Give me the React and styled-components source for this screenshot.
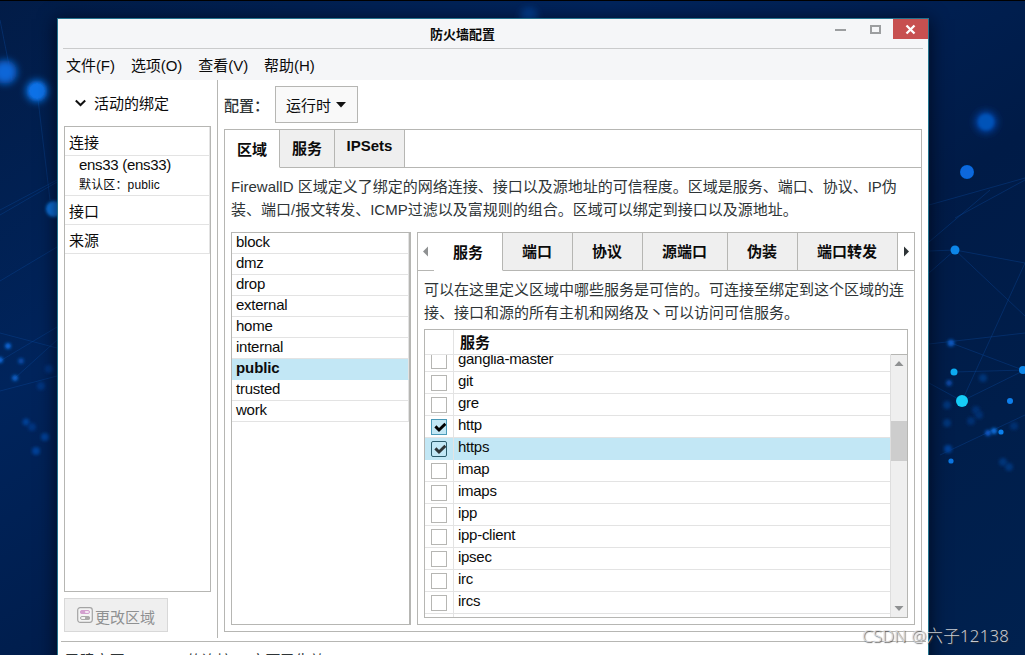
import styled, { createGlobalStyle } from 'styled-components'

const GlobalStyle = createGlobalStyle`
    * {
        box-sizing:border-box;
    }
    body {
        margin:0;
        background:#011c46;
        overflow:hidden;
        font-family:"Liberation Sans", "Noto Sans CJK SC", sans-serif;
        font-size:15px;
        color:#0b0b0b;
    }
`
const Desktop = styled.div`
    position:relative;
    width:1025px;
    height:655px;
    overflow:hidden;
    border-top:1px solid #000;
`
const Wallpaper = styled.svg`
    position:absolute;
    top:-1px;
    left:0;
    z-index:-1;
`
const Window = styled.div`
    position:absolute;
    left:57px;
    top:17px;
    width:872px;
    height:660px;
    border:1px solid #24748f;
    background:#fff;
    box-shadow:0 3px 16px 2px rgba(0,5,20,0.7);
    display:flex;
    flex-direction:column;
`
const Header = styled.div`
    background:#f5f6f8;
    height:61px;
    flex:none;
`
const TitleBar = styled.div`
    display:grid;
    grid-template-columns:105px 1fr 105px;
    height:30px;
    margin-left:5px;
    border-bottom:1px solid #cacbcc;
    width:860px;
`
const Title = styled.div`
    grid-column:2;
    text-align:center;
    font-size:13px;
    font-weight:700;
    line-height:31px;
    padding-right:61px;
`
const WindowButtons = styled.div`
    display:flex;
    width:110px;
    justify-content:flex-end;
`
const WindowButton = styled.div`
    width:35px;
    height:20px;
    flex:none;
    background:${props => props.$close ? '#c75050' : 'none'};
    svg {
        display:block;
    }
`
const MenuBar = styled.div`
    display:flex;
    gap:16px;
    padding-left:8px;
    line-height:34px;
    letter-spacing:-0.05px;
`
const Body = styled.div`
    display:flex;
    height:558px;
    flex:none;
`
const Sidebar = styled.div`
    width:160px;
    height:558px;
    border-right:1px solid #b6b6b3;
    padding:9px 6px 0;
    display:flex;
    flex-direction:column;
`
const Expander = styled.div`
    display:flex;
    align-items:center;
    gap:7px;
    height:29px;
    line-height:29px;
    padding-left:10px;
    margin-bottom:8px;
    svg {
        margin-bottom:1px;
    }
`
const Bindings = styled.div`
    width:147px;
    height:466px;
    border:1px solid #b6b6b3;
`
const BindingRow = styled.div`
    height:${props => props.$tall ? '40px' : '29px'};
    padding:${props => props.$tall ? '0 0 0 14px' : '2px 0 0 4px'};
    line-height:${props => props.$tall ? '18px' : '28px'};
    letter-spacing:${props => props.$tall ? '-0.3px' : '0'};
    border-bottom:1px solid #e3e3e3;
    border-right:1px solid #e3e3e3;
    white-space:nowrap;
`
const Small = styled.div`
    font-size:12px;
    line-height:23px;
    letter-spacing:0.15px;
`
const ChangeZone = styled.div`
    width:104px;
    height:34px;
    margin-top:6px;
    border:1px solid #d8d8d8;
    background:#efefef;
    color:#8f9192;
    display:flex;
    align-items:center;
    gap:2px;
    padding-left:12px;
    white-space:nowrap;
`
const ChangeZoneText = styled.span`
    padding-top:2px;
`
const Main = styled.div`
    padding:6px 0 0 6px;
    width:704px;
`
const ConfigRow = styled.div`
    display:flex;
    align-items:center;
    height:37px;
    margin-bottom:6px;
`
const ConfigLabel = styled.div`
    width:51px;
    color:#2e3436;
    font-weight:500;
`
const Combo = styled.div`
    display:flex;
    align-items:center;
    gap:5px;
    width:83px;
    height:37px;
    padding-left:10px;
    border:1px solid #b6b6b3;
    background:#f9f9f9;
`
const Notebook = styled.div`
    width:${props => props.$width}px;
    height:${props => props.$height}px;
    border:1px solid #b6b6b3;
    background:#fff;
`
const Tabs = styled.div`
    display:flex;
    height:38px;
`
const Tab = styled.div`
    width:${props => props.$width}px;
    flex:none;
    height:38px;
    text-align:center;
    font-weight:700;
    line-height:${props => props.$line || 37}px;
    border-right:1px solid #b6b6b3;
    border-bottom:1px solid ${props => props.$active ? 'transparent' : '#b6b6b3'};
    background:${props => props.$active ? '#fff' : '#efefef'};
    padding-top:${props => props.$active ? '1px' : '0'};
    padding-right:${props => props.$shift || 0}px;
`
const TabFill = styled.div`
    flex:1;
    border-bottom:1px solid #b6b6b3;
`
const TabArrow = styled.div`
    width:${props => props.$width}px;
    flex:none;
    border-bottom:1px solid #b6b6b3;
    svg {
        display:block;
    }
`
const Description = styled.div`
    color:#2e3436;
    line-height:23px;
    white-space:nowrap;
    padding:7px 0 0 6px;
    height:${props => props.$height}px;
`
const Panes = styled.div`
    display:flex;
    gap:6px;
    padding-left:6px;
`
const ZoneList = styled.div`
    width:180px;
    height:393px;
    border:1px solid #b6b6b3;
    border-right-width:2px;
`
const Zone = styled.div`
    height:21px;
    padding-left:4px;
    line-height:18px;
    letter-spacing:${props => props.$selected ? '-0.1px' : '-0.25px'};
    border-bottom:1px solid #e3e3e3;
    border-right:1px solid #e3e3e3;
    ${props => props.$selected && `
        background:#c2e7f5;
        border-bottom-color:#c2e7f5;
        font-weight:700;
    `}
`
const ServiceTable = styled.div`
    margin-left:6px;
    width:484px;
    height:289px;
    border:1px solid #b6b6b3;
`
const TableHead = styled.div`
    display:grid;
    grid-template-columns:29px 437px 16px;
    grid-template-rows:25px;
    height:25px;
    font-weight:700;
    line-height:26px;
`
const HeadCell = styled.div`
    border-right:${props => props.$first ? '1px solid #e3e3e3' : 'none'};
    border-bottom:1px solid ${props => props.$dark ? '#b6b6b3' : '#e3e3e3'};
    padding-left:6px;
`
const TableBody = styled.div`
    display:flex;
    height:262px;
`
const Rows = styled.div`
    width:466px;
    height:262px;
    overflow:hidden;
    border-right:1px solid #dedede;
    display:flex;
    flex-direction:column;
    justify-content:flex-end;
`
const Row = styled.div`
    display:grid;
    grid-template-columns:29px 1fr;
    flex:none;
    height:22px;
    line-height:18px;
    border-bottom:1px solid #e3e3e3;
    ${props => props.$selected && `
        background:#c2e7f5;
        border-bottom-color:#c2e7f5;
    `}
`
const CheckCell = styled.div`
    border-right:1px solid #e3e3e3;
    padding:3px 0 0 6px;
    height:22px;
`
const Name = styled.div`
    padding-left:4px;
    letter-spacing:-0.28px;
`
const Box = styled.div`
    width:16px;
    height:16px;
    border:1px solid #b6b6b3;
    background:#fff;
    ${props => props.$checked && `
        border-color:#4a9ab8;
        background:#c2e7f5;
    `}
    ${props => props.$focus && `
        border-color:#2a5a6a;
        border-radius:2px;
    `}
    svg {
        display:block;
    }
`
const PartialRow = styled.div`
    height:3px;
    flex:none;
    width:29px;
    border-right:1px solid #e3e3e3;
`
const Scrollbar = styled.div`
    width:16px;
    height:262px;
    background:#efefef;
    display:flex;
    flex-direction:column;
`
const Thumb = styled.div`
    height:40px;
    background:#cdcdcd;
    margin:50px 0 140px;
`
const StatusBar = styled.div`
    margin:3px 2px 0 3px;
    border-top:1px solid #b6b6b3;
    padding:7px 0 0 4px;
    line-height:24px;
    white-space:nowrap;
    letter-spacing:-0.1px;
    color:#2e3436;
`
const Watermark = styled.div`
    position:absolute;
    left:862px;
    top:624px;
    font-family:"Noto Sans", "Noto Sans CJK SC", sans-serif;
    font-size:16.7px;
    font-weight:300;
    letter-spacing:0.25px;
    line-height:22px;
    color:rgba(225,225,228,0.9);
    text-shadow:1px 1px 1px rgba(50,50,50,0.8);
    white-space:nowrap;
`

const zones = ['block', 'dmz', 'drop', 'external', 'home', 'internal', 'public', 'trusted', 'work']
const services = ['ganglia-master', 'git', 'gre', 'http', 'https', 'imap', 'imaps', 'ipp', 'ipp-client', 'ipsec', 'irc', 'ircs']
const enabled = ['http', 'https']

// x, y, radius, colour, filter
const dots = [
    [5, 72, 12, '#0866d8', 'haze'], [37, 91, 11, '#0872e8', 'haze'], [37, 91, 8, '#0872e8', 'soft'], [54, 209, 8, '#0874e0', 'soft'],
    [8, 346, 3, '#0a68d8', 'soft'], [21, 361, 3, '#0748a5', 'soft'], [0, 360, 3, '#0a68d8', 'soft'], [15, 378, 3, '#0a60c8', 'soft'],
    [49, 369, 4, '#05357f', 'soft'], [41, 386, 4, '#05357f', 'soft'], [26, 422, 3.5, '#063f95', 'soft'], [32, 427, 4, '#05357f', 'soft'],
    [45, 437, 4, '#063f95', 'soft'], [36, 451, 4, '#063f95', 'soft'],
    [986, 122, 11, '#0340a0', 'haze'], [986, 122, 8, '#0553b8', 'soft'], [967, 172, 7, '#0767dc', 'crisp'], [955, 250, 4.5, '#0b86e8', 'crisp'],
    [951, 343, 3.5, '#0a58c0', 'soft'], [954, 372, 3.5, '#0caaf0', 'crisp'], [949, 383, 3, '#084aa8', 'soft'],
    [962, 401, 6, '#13cdf7', 'crisp'], [1010, 401, 3, '#0c80ed', 'crisp'], [1023, 370, 4, '#0b86e8', 'crisp'],
    [983, 378, 4, '#043478', 'soft'], [947, 405, 4, '#043478', 'soft'], [947, 423, 4, '#043478', 'soft'],
    [976, 410, 4, '#032d70', 'soft'], [979, 415, 4, '#032d70', 'soft'], [971, 421, 4, '#032d70', 'soft'],
    [1014, 426, 4, '#032d70', 'soft'], [988, 433, 3, '#0958c8', 'soft'], [994, 431, 3, '#0a70e0', 'soft'], [1001, 432, 2.6, '#0c80ed', 'crisp'],
    [948, 449, 4, '#063f95', 'soft'], [951, 461, 2.6, '#0b75e0', 'crisp'], [1003, 462, 4, '#043478', 'soft'], [1009, 467, 4, '#043478', 'soft'],
    [529, 17, 9, '#064094', 'haze'],
]
const lines = [
    [0, 215, 57, 182], [0, 281, 57, 247], [0, 333, 57, 348], [0, 391, 57, 376], [0, 361, 57, 327],
    [37, 91, 50, 200], [0, 210, 57, 180], [0, 20, 12, 80], [15, 378, 57, 340],
    [929, 205, 1025, 178], [955, 218, 1025, 180], [929, 273, 955, 250], [955, 250, 1025, 263],
    [955, 250, 1025, 316], [929, 344, 1025, 333], [962, 401, 1025, 263], [962, 401, 1025, 370],
    [929, 383, 962, 401], [951, 343, 1023, 370], [954, 372, 1025, 370],
    [929, 242, 990, 190], [940, 455, 1025, 415], [929, 251, 955, 250],
]

const Background = () => (
    <Wallpaper width="1025" height="655" viewBox="0 0 1025 655">
        <defs>
            <linearGradient id="sky" x1="0" y1="0" x2="1" y2="1">
                <stop offset="0" stopColor="#021c47"/>
                <stop offset="0.3" stopColor="#00245c"/>
                <stop offset="0.6" stopColor="#001b47"/>
                <stop offset="1" stopColor="#00214f"/>
            </linearGradient>
            <filter id="haze" x="-100%" y="-100%" width="300%" height="300%">
                <feGaussianBlur stdDeviation="3.6"/>
            </filter>
            <filter id="soft" x="-100%" y="-100%" width="300%" height="300%">
                <feGaussianBlur stdDeviation="1.7"/>
            </filter>
            <filter id="crisp" x="-50%" y="-50%" width="200%" height="200%">
                <feGaussianBlur stdDeviation="0.6"/>
            </filter>
        </defs>
        <rect width="1025" height="655" fill="url(#sky)"/>
        {lines.map(([x1, y1, x2, y2], i) => (
            <line key={i} x1={x1} y1={y1} x2={x2} y2={y2} stroke="#0b4596" strokeOpacity="0.4"/>
        ))}
        {dots.map(([cx, cy, r, fill, filter], i) => (
            <circle key={i} cx={cx} cy={cy} r={r} fill={fill} filter={`url(#${filter})`}/>
        ))}
    </Wallpaper>
)

const Check = ({ color }) => (
    <svg width="14" height="14" viewBox="0 0 14 14">
        <path d="M3.4 6.4 7 10 13.4 3.8" fill="none" stroke={color} strokeWidth="2.9"/>
    </svg>
)

const TitleRow = () => (
    <TitleBar>
        <Title>防火墙配置</Title>
        <WindowButtons>
            <WindowButton>
                <svg width="35" height="20"><path d="M12 10h11v2H12z" fill="#9c9ea0"/></svg>
            </WindowButton>
            <WindowButton>
                <svg width="35" height="20"><path d="M13 7h9v7h-9z" fill="none" stroke="#9c9ea0" strokeWidth="2"/></svg>
            </WindowButton>
            <WindowButton $close>
                <svg width="35" height="20"><path d="M13.5 6.5l8 8M21.5 6.5l-8 8" stroke="#fff" strokeWidth="2.3"/></svg>
            </WindowButton>
        </WindowButtons>
    </TitleBar>
)

const SidebarPanel = () => (
    <Sidebar>
        <Expander>
            <svg width="13" height="12" viewBox="0 0 13 12">
                <path d="M1.8 3.5 6.5 8l4.7-4.5" fill="none" stroke="#111" strokeWidth="2"/>
            </svg>
            活动的绑定
        </Expander>
        <Bindings>
            <BindingRow>连接</BindingRow>
            <BindingRow $tall>
                ens33 (ens33)
                <Small>默认区：public</Small>
            </BindingRow>
            <BindingRow>接口</BindingRow>
            <BindingRow>来源</BindingRow>
        </Bindings>
        <ChangeZone>
            <svg width="16" height="16" viewBox="0 0 16 16">
                <rect x="0.7" y="0.7" width="14.6" height="14.6" rx="2.5" fill="#f3f3f3" stroke="#a4a4a4" strokeWidth="1.2"/>
                <rect x="3.5" y="3.5" width="9" height="3" rx="1.5" fill="#f3e3f2" stroke="#d2a0cf"/>
                <rect x="3.2" y="3.2" width="5" height="3.6" rx="1.6" fill="#d2a0cf"/>
                <rect x="3.5" y="9.5" width="9" height="3" rx="1.5" fill="#f3f3f3" stroke="#aaa"/>
                <rect x="8" y="9.2" width="5" height="3.6" rx="1.6" fill="#aaa"/>
            </svg>
            <ChangeZoneText>更改区域</ChangeZoneText>
        </ChangeZone>
    </Sidebar>
)

const ServicePane = () => (
    <Notebook $width={498} $height={393}>
        <Tabs>
            <TabArrow $width={16}>
                <svg width="16" height="37"><path d="M10 13.5v10L5 18.5z" fill="#8f9192"/></svg>
            </TabArrow>
            <Tab $width={69} $active>服务</Tab>
            <Tab $width={70} $shift={1}>端口</Tab>
            <Tab $width={70} $shift={1}>协议</Tab>
            <Tab $width={85} $shift={1}>源端口</Tab>
            <Tab $width={70} $shift={1}>伪装</Tab>
            <Tab $width={100} $shift={1}>端口转发</Tab>
            <TabArrow $width={16}>
                <svg width="16" height="37"><path d="M6 13.5v10l5-5z" fill="#2e3436"/></svg>
            </TabArrow>
        </Tabs>
        <Description $height={58}>
            可以在这里定义区域中哪些服务是可信的。可连接至绑定到这个区域的连<br/>
            接、接口和源的所有主机和网络及丶可以访问可信服务。
        </Description>
        <ServiceTable>
            <TableHead>
                <HeadCell $first/>
                <HeadCell>服务</HeadCell>
                <HeadCell $dark/>
            </TableHead>
            <TableBody>
                <Rows>
                    {services.map((service) => (
                        <Row key={service} $selected={service === 'https'}>
                            <CheckCell>
                                <Box $checked={enabled.includes(service)} $focus={service === 'https'}>
                                    {enabled.includes(service) &&
                                        <Check color={service === 'https' ? '#2e3436' : '#000'}/>}
                                </Box>
                            </CheckCell>
                            <Name>{service}</Name>
                        </Row>
                    ))}
                    <PartialRow/>
                </Rows>
                <Scrollbar>
                    <svg width="16" height="16"><path d="M3.5 11h9L8 6z" fill="#8f9192"/></svg>
                    <Thumb/>
                    <svg width="16" height="16"><path d="M3.5 5h9L8 10z" fill="#8f9192"/></svg>
                </Scrollbar>
            </TableBody>
        </ServiceTable>
    </Notebook>
)

const App = () => {
    return(
        <Desktop>
            <GlobalStyle/>
            <Background/>
            <Window>
                <Header>
                    <TitleRow/>
                    <MenuBar>
                        <span>文件(F)</span>
                        <span>选项(O)</span>
                        <span>查看(V)</span>
                        <span>帮助(H)</span>
                    </MenuBar>
                </Header>
                <Body>
                    <SidebarPanel/>
                    <Main>
                        <ConfigRow>
                            <ConfigLabel>配置：</ConfigLabel>
                            <Combo>
                                运行时
                                <svg width="10" height="6"><path d="M0 0h10L5 5.5z" fill="#111"/></svg>
                            </Combo>
                        </ConfigRow>
                        <Notebook $width={698} $height={503}>
                            <Tabs>
                                <Tab $width={55} $active>区域</Tab>
                                <Tab $width={55}>服务</Tab>
                                <Tab $width={70} $line={32}>IPSets</Tab>
                                <TabFill/>
                            </Tabs>
                            <Description $height={64}>
                                FirewallD 区域定义了绑定的网络连接、接口以及源地址的可信程度。区域是服务、端口、协议、IP伪<br/>
                                装、端口/报文转发、ICMP过滤以及富规则的组合。区域可以绑定到接口以及源地址。
                            </Description>
                            <Panes>
                                <ZoneList>
                                    {zones.map((zone) => (
                                        <Zone key={zone} $selected={zone === 'public'}>{zone}</Zone>
                                    ))}
                                </ZoneList>
                                <ServicePane/>
                            </Panes>
                        </Notebook>
                    </Main>
                </Body>
                <StatusBar>已建立至 firewalld 的连接。 变更已生效</StatusBar>
            </Window>
            <Watermark>CSDN @六子12138</Watermark>
        </Desktop>
    )
}
export default App
